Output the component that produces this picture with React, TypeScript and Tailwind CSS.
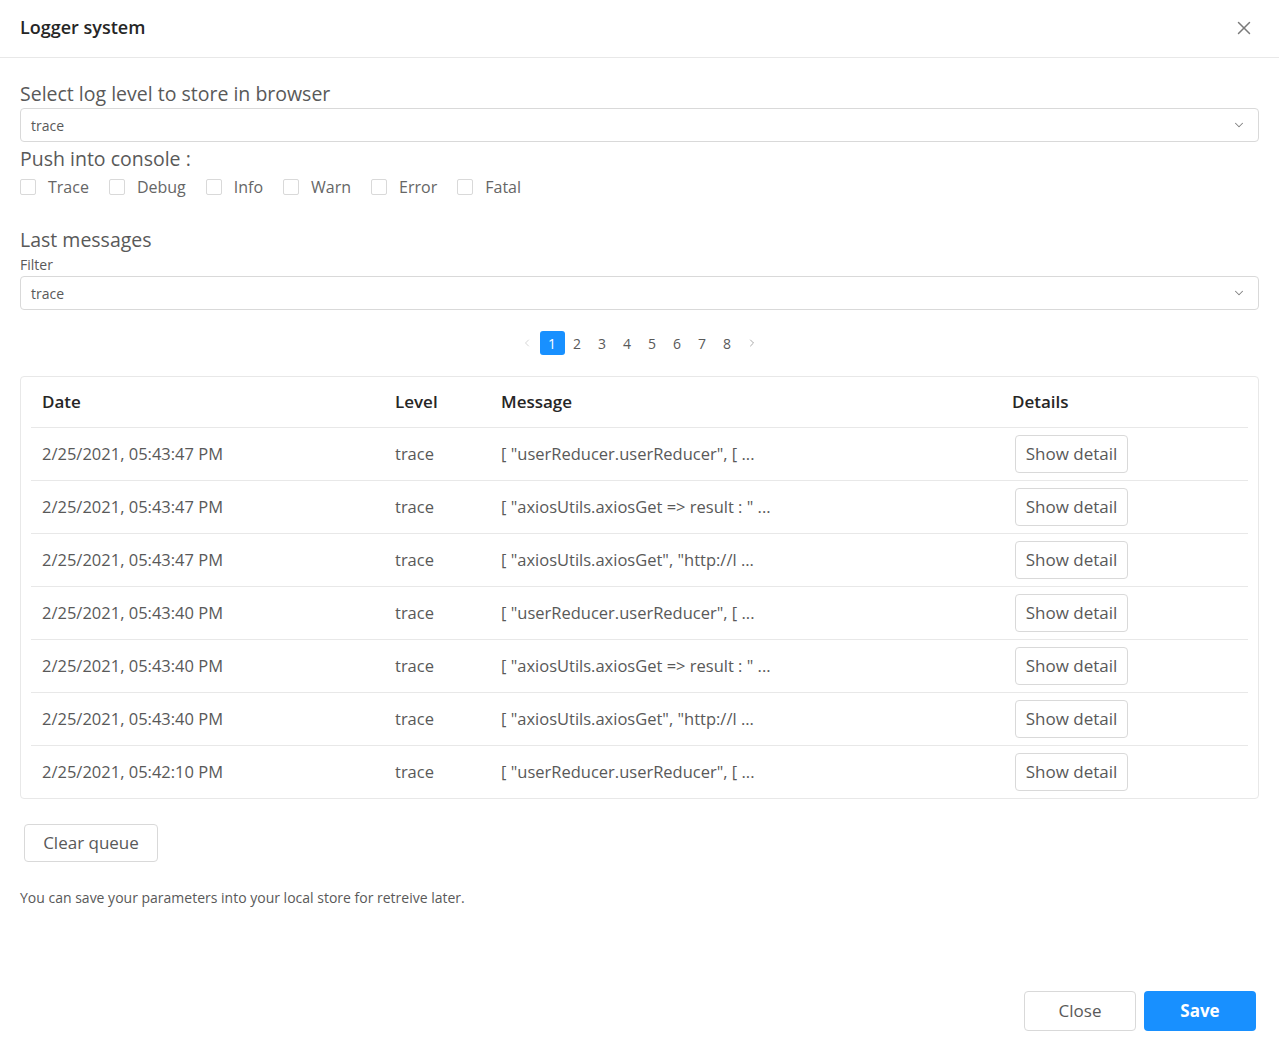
import { X, ChevronDown, ChevronLeft, ChevronRight } from 'lucide-react';

const rows = [
    { date: '2/25/2021, 05:43:47 PM', msg: '[ "userReducer.userReducer", [ ...' },
    { date: '2/25/2021, 05:43:47 PM', msg: '[ "axiosUtils.axiosGet => result : " ...' },
    { date: '2/25/2021, 05:43:47 PM', msg: '[ "axiosUtils.axiosGet", "http://l ...' },
    { date: '2/25/2021, 05:43:40 PM', msg: '[ "userReducer.userReducer", [ ...' },
    { date: '2/25/2021, 05:43:40 PM', msg: '[ "axiosUtils.axiosGet => result : " ...' },
    { date: '2/25/2021, 05:43:40 PM', msg: '[ "axiosUtils.axiosGet", "http://l ...' },
    { date: '2/25/2021, 05:42:10 PM', msg: '[ "userReducer.userReducer", [ ...' },
];

const levels = ['Trace', 'Debug', 'Info', 'Warn', 'Error', 'Fatal'];

function Select({ value }: { value: string }) {
    return (
        <div className="h-[34px] border border-[#d9d9d9] rounded-[4px] flex items-center justify-between pl-[10px] pr-[12px]">
            <span className="text-[14px] text-[#595959]">{value}</span>
            <ChevronDown size={14} strokeWidth={1.75} className="text-[#7f7f7f]" />
        </div>
    );
}

export default function App() {
    return (
        <div
            className="w-[1279px] h-[1044px] bg-white flex flex-col text-[#595959]"
            style={{ fontFamily: '"Open Sans", "Noto Sans", sans-serif' }}
        >
            {/* Header */}
            <div className="h-[58px] shrink-0 border-b border-[#e8e8e8] flex items-center justify-between px-5">
                <h1 className="text-[18px] font-semibold text-[#262626] -mt-[2px]">Logger system</h1>
                <button className="text-[#7a7a7a] mr-[4px] -mt-[2px]">
                    <X size={22} strokeWidth={1.6} />
                </button>
            </div>

            {/* Body */}
            <div className="flex-1 px-5 pt-[23px]">
                <div className="text-[19.5px] leading-[26px] font-medium">Select log level to store in browser</div>
                <div className="mt-px">
                    <Select value="trace" />
                </div>
                <div className="mt-[4px] text-[19.5px] leading-[26px] font-medium">Push into console :</div>
                <div className="mt-[2px] h-[26px] flex items-center gap-5">
                    {levels.map((l) => (
                        <label key={l} className="flex items-center gap-3 text-[16px] text-[#666]">
                            <span className="w-4 h-4 border border-[#d9d9d9] rounded-[2px] bg-white" />
                            {l}
                        </label>
                    ))}
                </div>

                <div className="mt-[27px] text-[19.5px] leading-[26px] font-medium">Last messages</div>
                <div className="mt-[2px] text-[14px] leading-[20px]">Filter</div>
                <div className="mt-px">
                    <Select value="trace" />
                </div>

                {/* Pagination */}
                <div className="mt-[21px] flex justify-center">
                    <span className="w-[25px] h-6 flex items-center justify-center text-[#c8c8c8]">
                        <ChevronLeft size={12} strokeWidth={1.5} />
                    </span>
                    <span className="w-[25px] h-6 flex items-center justify-center rounded-[3px] bg-[#1890ff] text-white text-[14px]">1</span>
                    {[2, 3, 4, 5, 6, 7, 8].map((n) => (
                        <span key={n} className="w-[25px] h-6 flex items-center justify-center text-[14px] text-[#595959]">
                            {n}
                        </span>
                    ))}
                    <span className="w-[25px] h-6 flex items-center justify-center text-[#8c8c8c]">
                        <ChevronRight size={12} strokeWidth={1.5} />
                    </span>
                </div>

                {/* Table */}
                <div className="mt-[21px] border border-[#e8e8e8] rounded-[4px] px-[10px]">
                    <div className="grid grid-cols-[353px_106px_511px_1fr] h-[51px] items-center border-b border-[#e8e8e8] text-[17px] font-semibold text-[#262626]">
                        <div className="pl-[11px]">Date</div>
                        <div className="pl-[11px]">Level</div>
                        <div className="pl-[11px]">Message</div>
                        <div className="pl-[11px]">Details</div>
                    </div>
                    {rows.map((r, i) => (
                        <div
                            key={i}
                            className={`grid grid-cols-[353px_106px_511px_1fr] items-center text-[16.5px] ${i < rows.length - 1 ? 'h-[53px] border-b border-[#e8e8e8]' : 'h-[52px]'}`}
                        >
                            <div className="pl-[11px]">{r.date}</div>
                            <div className="pl-[11px]">trace</div>
                            <div className="pl-[11px]">{r.msg}</div>
                            <div className="pl-[14px]">
                                <button className="h-[38px] w-[113px] border border-[#d9d9d9] rounded-[4px] bg-white text-[17px] text-[#595959]">
                                    Show detail
                                </button>
                            </div>
                        </div>
                    ))}
                </div>

                <button className="mt-[25px] ml-1 h-[38px] w-[134px] border border-[#d9d9d9] rounded-[4px] bg-white text-[17px] font-medium text-[#595959]">
                    Clear queue
                </button>

                <p className="mt-[26px] text-[14px] leading-[20px]">You can save your parameters into your local store for retreive later.</p>
            </div>

            {/* Footer */}
            <div className="flex justify-end gap-2 pr-[23px] pb-[13px]">
                <button className="w-[112px] h-[40px] border border-[#d9d9d9] rounded-[4px] bg-white text-[17px] text-[#595959]">
                    Close
                </button>
                <button className="w-[112px] h-[40px] rounded-[4px] bg-[#1890ff] text-[17px] font-bold text-white">
                    Save
                </button>
            </div>
        </div>
    );
}
